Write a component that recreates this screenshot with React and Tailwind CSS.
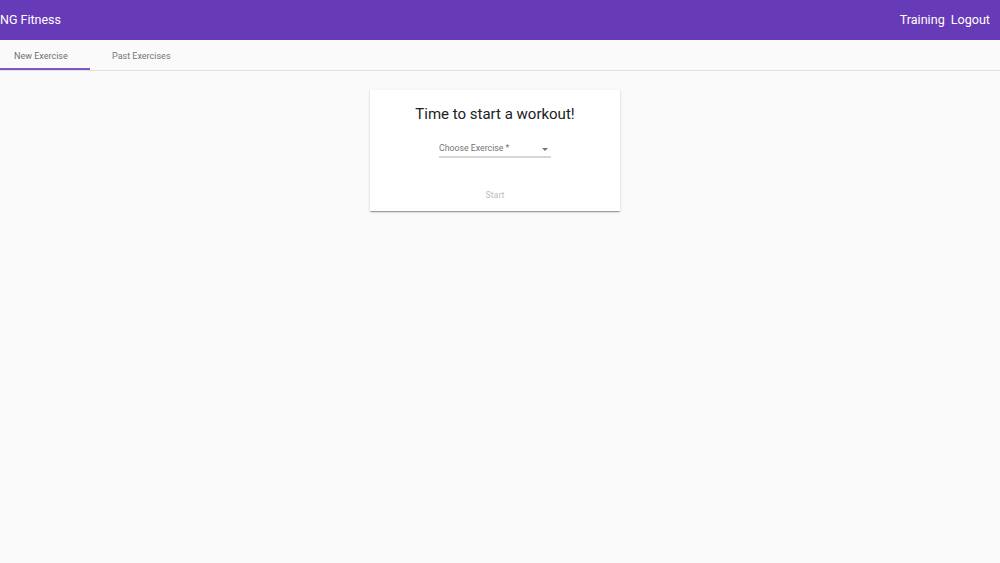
import React from 'react';

const App = () => {
  return (
    <div className="min-h-[563px] bg-[#fafafa] font-['Roboto',sans-serif]">
      <header className="h-10 bg-[#673ab7] text-white flex items-center justify-between pr-[10px]">
        <div className="text-[12.5px] leading-none pt-[1px]">NG Fitness</div>
        <nav className="flex items-center gap-[6px] pt-[1px]">
          <a className="text-[12.6px]">Training</a>
          <a className="text-[12.6px]">Logout</a>
        </nav>
      </header>

      <div className="flex h-[31px] border-b border-[#e0e0e0]">
        <div className="w-[90px] flex items-center pl-[14px] text-[9px] text-[#6f6f6f] border-b-2 border-[#7e57c2] pt-[5px]">
          New Exercise
        </div>
        <div className="flex items-center pl-[22px] text-[9px] text-[#757575] pt-[3px]">
          Past Exercises
        </div>
      </div>

      <main className="flex justify-center pt-[19px] pr-[10px]">
        <div className="w-[250px] pt-[14px] pb-[10px] bg-white shadow-[0_2px_1px_-1px_rgba(0,0,0,0.2),0_1px_1px_0_rgba(0,0,0,0.14),0_1px_3px_0_rgba(0,0,0,0.12)] flex flex-col items-center">
          <h1 className="text-[15px] text-[#212121] leading-[20px]">Time to start a workout!</h1>
          <div className="mt-[19px] w-[112px] border-b-2 border-[#d6d6d6] pb-[2px] flex items-center justify-between">
            <span className="text-[8.75px] text-[#757575] leading-[11px]">Choose Exercise *</span>
            <svg width="6" height="3" viewBox="0 0 6 3" className="mr-[3px] mt-[1px]">
              <path d="M0 0 L6 0 L3 3 Z" fill="#757575" />
            </svg>
          </div>
          <button className="mt-[32px] text-[8.75px] leading-[11px] text-[#bdbdbd]">Start</button>
        </div>
      </main>
    </div>
  );
};

export default App;
